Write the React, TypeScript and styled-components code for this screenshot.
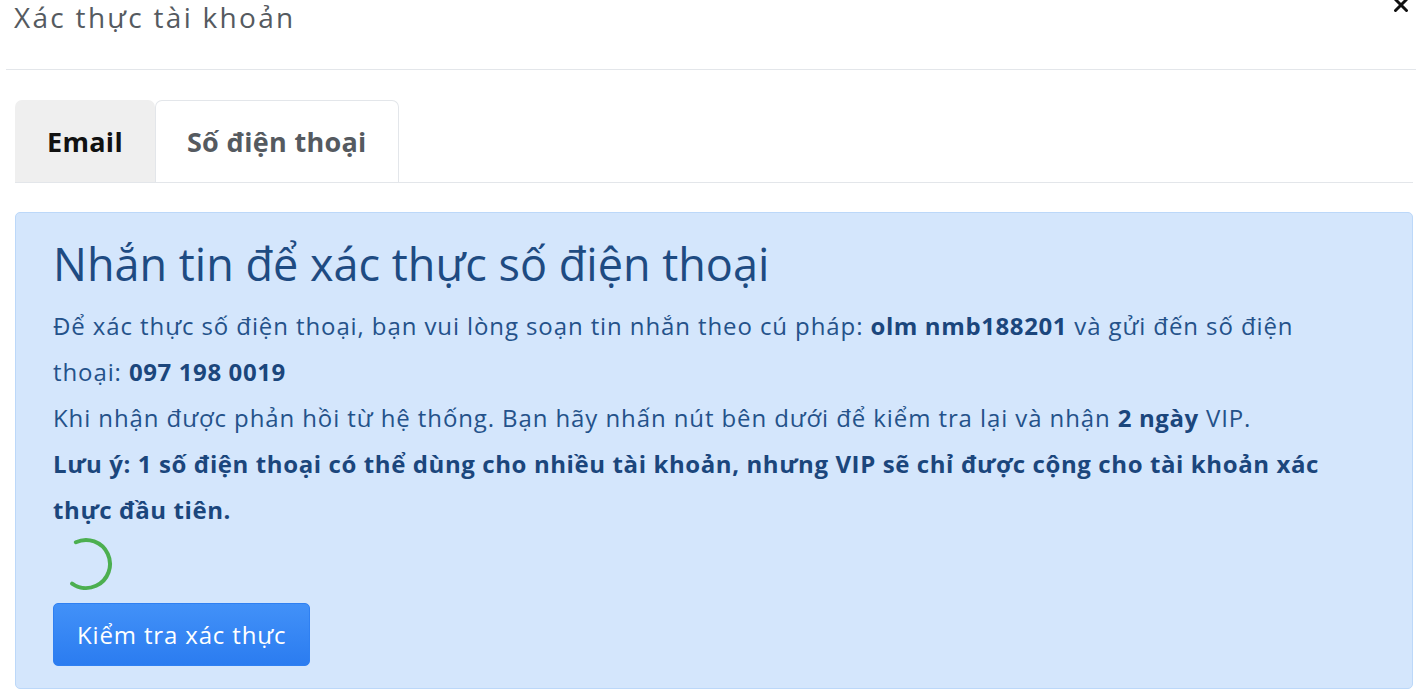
import styled, { createGlobalStyle } from 'styled-components';
import { X } from 'lucide-react';

const GlobalStyle = createGlobalStyle`
	html, body {
		margin: 0;
		padding: 0;
		background: #ffffff;
	}
	body {
		font-family: 'Open Sans', 'Noto Sans', sans-serif;
		overflow: hidden;
	}
`;

const Modal = styled.div`
	width: 1410px;
	margin-left: 6px;
	height: 696px;
	overflow: hidden;
`;

const Header = styled.div`
	display: flex;
	justify-content: space-between;
	align-items: flex-start;
	height: 69px;
	padding-left: 8px;
	border-bottom: 1px solid #e3e6ea;
`;

const Title = styled.h5`
	margin: 0;
	padding-top: 1px;
	font-size: 28px;
	line-height: 32px;
	letter-spacing: 2.3px;
	font-weight: 400;
	color: #555a60;
`;

const CloseButton = styled.button`
	border: 0;
	background: none;
	padding: 0;
	margin: -6px 4px 0 0;
	color: #111;
	display: flex;
	cursor: pointer;
`;

const Body = styled.div`
	padding: 30px 3px 0 9px;
`;

const TabList = styled.div`
	display: flex;
	border-bottom: 1px solid #e3e6ea;
`;

const Tab = styled.div<{ active?: boolean }>`
	height: 82px;
	display: flex;
	align-items: center;
	padding: 0 31px;
	font-size: 27px;
	letter-spacing: 0.3px;
	font-weight: 700;
	box-sizing: border-box;
	border-radius: 7px 7px 0 0;
	color: ${props => (props.active ? '#555a60' : '#111')};
	background: ${props => (props.active ? '#ffffff' : '#efefef')};
	border: 1px solid ${props => (props.active ? '#e3e6ea' : 'transparent')};
	border-bottom: 0;
`;

const Alert = styled.div`
	margin-top: 29px;
	background: #d4e6fc;
	border: 1px solid #bcd8f9;
	border-radius: 5px;
	padding: 22px 50px 22px 37px;
	color: #24528a;
`;

const AlertHeading = styled.h4`
	margin: 0 0 10px;
	font-size: 45px;
	line-height: 58px;
	font-weight: 400;
	color: #1e4b82;
`;

const Text = styled.div`
	font-size: 24px;
	line-height: 46px;
	letter-spacing: 0.9px;
	b {
		font-weight: 700;
		letter-spacing: 0.6px;
		color: #1b467c;
	}
`;

const Note = styled(Text)`
	font-weight: 700;
	letter-spacing: 0.6px;
	color: #1b467c;
`;

const Spinner = styled.svg`
	display: block;
	margin: 4px 0 12px 6px;
`;

const CheckButton = styled.button`
	display: block;
	height: 63px;
	padding: 0 23px;
	border: 1px solid #2f80f2;
	border-radius: 5px;
	background: linear-gradient(#4291f8, #2b7cf0);
	color: #ffffff;
	font-family: inherit;
	font-size: 24px;
	letter-spacing: 0.85px;
	cursor: pointer;
`;

export default function App() {
	return (
		<Modal>
			<GlobalStyle />
			<Header>
				<Title>Xác thực tài khoản</Title>
				<CloseButton>
					<X size={22} strokeWidth={3.2} />
				</CloseButton>
			</Header>
			<Body>
				<TabList>
					<Tab>Email</Tab>
					<Tab active>Số điện thoại</Tab>
				</TabList>
				<Alert>
					<AlertHeading>Nhắn tin để xác thực số điện thoại</AlertHeading>
					<Text>
						Để xác thực số điện thoại, bạn vui lòng soạn tin nhắn theo cú pháp: <b>olm nmb188201</b> và gửi đến số điện
						thoại: <b>097 198 0019</b>
					</Text>
					<Text>
						Khi nhận được phản hồi từ hệ thống. Bạn hãy nhấn nút bên dưới để kiểm tra lại và nhận <b>2 ngày</b> VIP.
					</Text>
					<Note>
						Lưu ý: 1 số điện thoại có thể dùng cho nhiều tài khoản, nhưng VIP sẽ chỉ được cộng cho tài khoản xác thực
						đầu tiên.
					</Note>
					<Spinner width="54" height="54" viewBox="0 0 54 54">
						<circle
							cx="27"
							cy="27"
							r="24"
							fill="none"
							stroke="#4caf50"
							strokeWidth="4"
							strokeLinecap="round"
							strokeDasharray="100 51"
							transform="rotate(-115 27 27)"
						/>
					</Spinner>
					<CheckButton>Kiểm tra xác thực</CheckButton>
				</Alert>
			</Body>
		</Modal>
	);
}
